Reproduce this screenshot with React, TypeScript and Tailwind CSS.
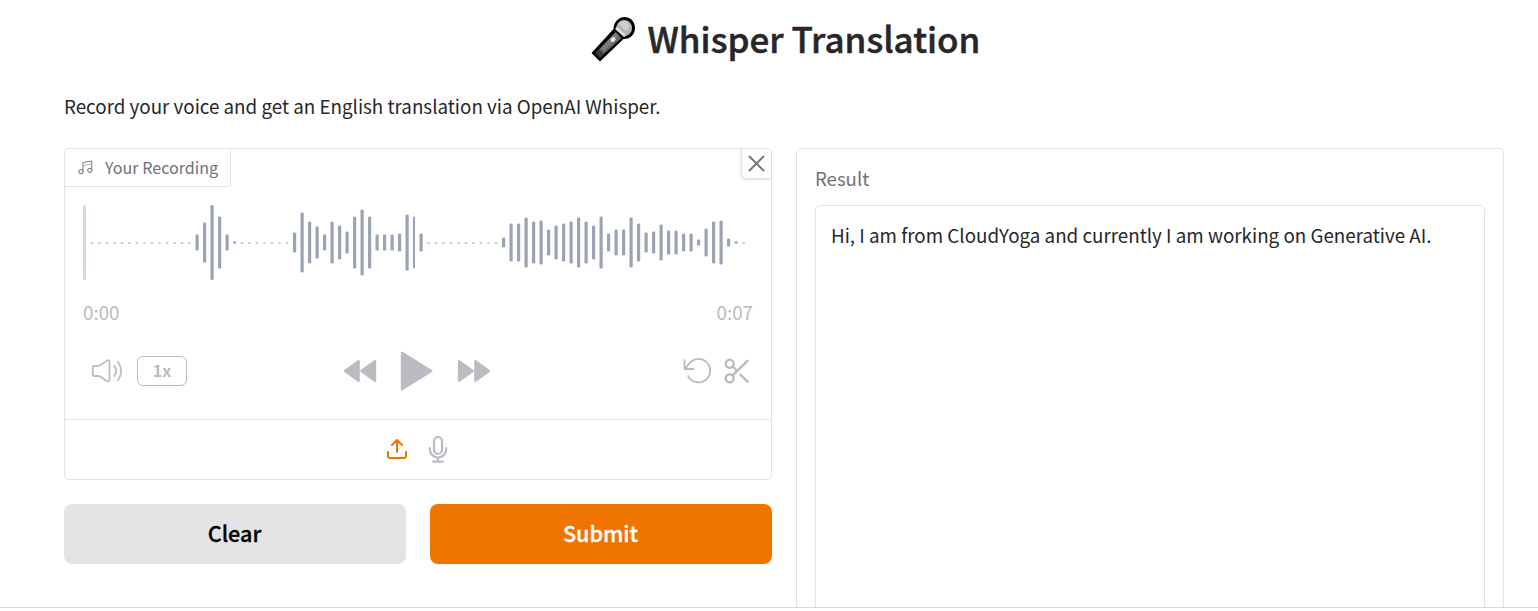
import React from "react";

const FIRST_HALF: Record<number, number> = {
  15: 16, 16: 40, 17: 75, 18: 52, 19: 16, 20: 2.5, 28: 20, 29: 60, 30: 42, 31: 32, 32: 16, 33: 42,
  34: 34, 35: 22, 36: 52, 37: 66, 38: 52, 39: 16, 40: 16, 41: 16, 42: 18, 43: 56, 44: 52,
};
const SECOND_HALF: Record<number, number> = {
  45: 18, 56: 10, 57: 38, 58: 38, 59: 50, 60: 42, 61: 44, 62: 26, 63: 34, 64: 38, 65: 42, 66: 50,
  67: 42, 68: 34, 69: 52, 70: 18, 71: 26, 72: 26, 73: 50, 74: 38, 75: 20, 76: 22, 77: 36, 78: 24,
  79: 24, 80: 18, 81: 18, 82: 6, 83: 28, 84: 42, 85: 44, 86: 8, 87: 2.5,
};
const LEVELS: Record<number, number> = { ...FIRST_HALF, ...SECOND_HALF };

function Waveform() {
  return (
    <svg className="block h-[75px] w-[670px]" viewBox="0 0 670 75">
      <rect x="0" y="0" width="3" height="75" rx="1.5" fill="#d8d5ea" />
      {Array.from({ length: 88 }, (_, k) => k + 1).map((i) => {
        const level = LEVELS[i];
        const x = i * 7.5 - (i >= 45 ? 1 : 0);
        if (level === undefined) {
          return <rect key={i} x={x} y="37" width="3" height="2" rx="0.8" fill="#cfcfd6" />;
        }
        return (
          <rect key={i} x={x} y={37.5 - level / 2} width={i === 44 ? 2 : 3.2} height={level} rx="1.3" fill="#9ca3b2" />
        );
      })}
    </svg>
  );
}

function MicEmoji() {
  return (
    <svg className="block h-[46px] w-[46px] shrink-0" viewBox="0 0 46 46">
      <path d="M1.500 37 23.500 13C23.500 6 29 1 34 1c6.500 0 11 4.500 11 11S40 23.500 33.500 23L10 45.500Z" fill="#000" />
      <path d="m5.500 37 20-21 6 6-21.500 19.500Z" fill="#686868" />
      <path d="m5.500 37 3.500-3.700 5 4.500-4 3.700Z" fill="#3b3b3b" />
      <path d="m11 32 15-15.500 3 3L14 35Z" fill="#7c7c7c" />
      <path d="M26 12C27 7 30 4 34 4c4.500 0 8 3.500 8 8s-3.500 8-8 8Z" fill="#b5b5b5" />
      <path d="M29 8c2-3 5-4 8-2l3 4-4 5Z" fill="#cecece" />
      <path d="m25 13 9 8 2-1.500-9-8.500Z" fill="#e3e3e3" />
      <ellipse cx="23" cy="23.500" rx="2.800" ry="2.200" transform="rotate(-40 23 23.500)" fill="#e9e9e9" />
    </svg>
  );
}

function MusicIcon() {
  return (
    <svg className="h-[15px] w-[15px]" viewBox="0 0 24 24" fill="none" stroke="currentColor" strokeWidth="1.7" strokeLinecap="round" strokeLinejoin="round">
      <path d="M8 18V4l14-2.500V16" />
      <path d="M9 8.500 21 6.500" strokeWidth="1" />
      <circle cx="4.800" cy="18.500" r="3.300" />
      <circle cx="18.800" cy="16.500" r="3.300" />
    </svg>
  );
}

function VolumeIcon() {
  return (
    <svg className="h-[26px] w-[32px]" viewBox="0 0 32 26" fill="none" stroke="currentColor" strokeWidth="1.8" strokeLinecap="round" strokeLinejoin="round">
      <path d="M1.800 9.500Q1.800 7.800 3.500 7.800H7.200Q8.200 7.800 9 7.200L15.800 2.700Q18.500 1.400 18.500 4V21.500Q18.500 24.400 15.800 23L9 18.500Q8.200 18 7.200 18H3.500Q1.800 18 1.800 16.300Z" />
      <path d="M23.200 8q3.800 5 0 10M27 4q6.500 9 0 18" />
    </svg>
  );
}

function RewindIcon() {
  return (
    <svg className="h-[24px] w-[34px]" viewBox="0 0 34 24" fill="currentColor" stroke="currentColor" strokeWidth="2.400" strokeLinejoin="round">
      <path d="M15.600 2.200v19.600L2 12ZM32 2.200v19.600L18.400 12Z" />
    </svg>
  );
}

function PlayIcon() {
  return (
    <svg className="h-[40px] w-[33px]" viewBox="0 0 33 40" fill="currentColor" stroke="currentColor" strokeWidth="2.400" strokeLinejoin="round">
      <path d="M2 1.800v36.400L31.300 20Z" />
    </svg>
  );
}

function UndoIcon() {
  return (
    <svg className="h-[26px] w-[28px]" viewBox="0 0 28 26" fill="none" stroke="currentColor" strokeWidth="1.800">
      <path d="M1.500 2.500v8.500h8.700" strokeLinecap="square" />
      <path d="M2 10.800 5.500 6.600A11.700 11.700 0 1 1 4.800 17.300" />
    </svg>
  );
}

function ScissorsIcon() {
  return (
    <svg className="h-[26px] w-[26px]" viewBox="0 0 26 26" fill="none" stroke="currentColor" strokeWidth="2.400" strokeLinecap="round">
      <circle cx="5.700" cy="5.700" r="4" />
      <circle cx="5.700" cy="20.300" r="4" />
      <path d="m8.700 8.500 4 4M8.700 17.300 23.500 2.800M16.300 16.500l7.300 7.200" />
    </svg>
  );
}

function UploadIcon() {
  return (
    <svg className="h-[22px] w-[22px]" viewBox="0 0 22 22" fill="none" stroke="currentColor" strokeWidth="2" strokeLinecap="round" strokeLinejoin="round">
      <path d="M11 14V2M6 7l5-5 5 5M2 14V18.300a1.700 1.700 0 0 0 1.700 1.700H18.300A1.700 1.700 0 0 0 20 18.300V14" />
    </svg>
  );
}

function MicIcon() {
  return (
    <svg className="h-[28px] w-[20px]" viewBox="0 0 20 28" fill="none" stroke="currentColor" strokeWidth="2.200" strokeLinecap="round">
      <rect x="6" y="2" width="8" height="17" rx="4" />
      <path d="M1.800 13v1.300a8.200 8.200 0 0 0 16.400 0v-1.300M10 22.500V26.600M5.200 26.700h9.600" />
    </svg>
  );
}

export default function App() {
  return (
    <div className="flex h-[611px] w-[1538px] flex-col bg-white font-['Noto_Sans_CJK_SC',sans-serif] text-[#27272a]">
      <div className="flex h-[607px] flex-col overflow-hidden pl-[64px] pr-[34px]">
        <h1 className="flex h-[78px] shrink-0 items-center justify-center gap-[12px] pl-[2px] text-[35px] font-medium leading-[76px] [-webkit-text-stroke:0.5px_currentColor]">
          <MicEmoji />
          <span className="whitespace-nowrap pb-[2px]">Whisper Translation</span>
        </h1>
        <p className="h-[70px] shrink-0 whitespace-nowrap text-[18.8px] leading-[56px]">
          Record your voice and get an English translation via OpenAI Whisper.
        </p>
        <div className="flex gap-[24px]">
          <div className="w-[708px] shrink-0">
            <section className="h-[332px] rounded-[5px] border border-[#e4e4e7] text-[#bbbbc2]">
              <div className="flex h-[38px] items-start justify-between">
                <div className="flex h-[38px] w-[166px] items-center gap-[12px] rounded-br-[5px] border-b border-r border-[#e4e4e7] pl-[13px] text-[#808089]">
                  <MusicIcon />
                  <span className="whitespace-nowrap text-[16.1px] leading-[35px] text-[#71717a]">Your Recording</span>
                </div>
                <button className="flex h-[30px] w-[30px] items-center justify-center rounded-bl-[5px] border-b border-l border-[#e4e4e7] text-[#71717a] shadow-sm">
                  <svg className="h-[18px] w-[18px]" viewBox="0 0 18 18" stroke="currentColor" strokeWidth="1.800" strokeLinecap="round">
                    <path d="m1.500 1.500 14 14M15.500 1.500l-14 14" />
                  </svg>
                </button>
              </div>
              <div className="pl-[18px] pt-[18px]">
                <Waveform />
              </div>
              <div className="flex h-[66px] justify-between px-[18px] text-[18.8px] leading-[64px]">
                <span>0:00</span>
                <span>0:07</span>
              </div>
              <div className="grid h-[50px] grid-cols-[1fr_auto_1fr] items-center pl-[26px] pr-[21px]">
                <div className="flex items-center gap-[14px]">
                  <VolumeIcon />
                  <span className="flex h-[30px] w-[50px] items-center justify-center rounded-[6px] border border-[#bbbbc2] pb-[2px] text-[16px] font-bold">1x</span>
                </div>
                <div className="-ml-[8px] flex items-center gap-[23.5px]">
                  <RewindIcon />
                  <PlayIcon />
                  <span className="rotate-180">
                    <RewindIcon />
                  </span>
                </div>
                <div className="flex items-center justify-end gap-[13px]">
                  <UndoIcon />
                  <ScissorsIcon />
                </div>
              </div>
              <div className="mt-[23px] flex h-[60px] items-center justify-center gap-[20px] border-t border-[#e4e4e7] pb-px pr-[2px]">
                <span className="text-[#f07400]">
                  <UploadIcon />
                </span>
                <MicIcon />
              </div>
            </section>
            <div className="mt-[24px] grid grid-cols-2 gap-[24px] text-[21.6px] font-medium [-webkit-text-stroke:0.3px_currentColor]">
              <button className="h-[60px] rounded-[8px] bg-[#e4e4e7] pb-px pr-px text-black">Clear</button>
              <button className="h-[60px] rounded-[8px] bg-[#f07400] pb-px pr-px text-white">Submit</button>
            </div>
          </div>
          <section className="flex h-[500px] w-[708px] shrink-0 flex-col rounded-[5px] border border-[#e4e4e7] px-[18px] pt-[15px]">
            <label className="h-[41px] text-[18.6px] leading-[28px] text-[#71717a]">Result</label>
            <div className="w-[670px] flex-1 rounded-[5px] border border-[#e4e4e7] px-[15px] pt-[14px] text-[18.8px] leading-[30px]">
              <span className="whitespace-nowrap">Hi, I am from CloudYoga and currently I am working on Generative AI.</span>
            </div>
          </section>
        </div>
      </div>
      <div className="h-px shrink-0 bg-[#d9d9dc]" />
    </div>
  );
}
